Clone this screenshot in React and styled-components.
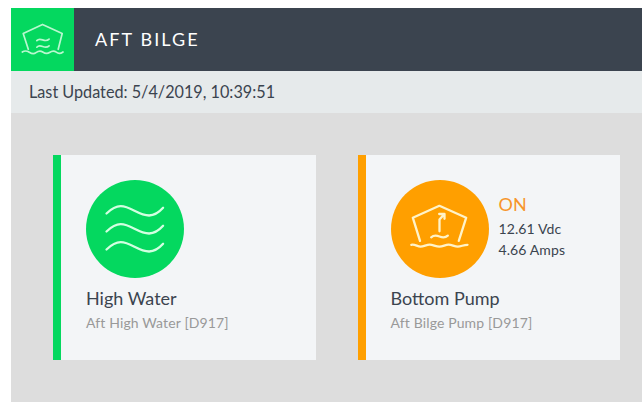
import { styled, createGlobalStyle } from 'styled-components'

const GlobalStyle = createGlobalStyle`
  body {
    margin: 0;
    background: #ffffff;
    font-family: Lato, 'Liberation Sans', sans-serif;
    overflow: hidden;
  }
`

const Panel = styled.main`
  box-sizing: border-box;
  height: 394px;
  margin: 8px 0 0 11px;
  background: #dddddd;
`

const Header = styled.header`
  display: flex;
  align-items: center;
  height: 63px;
  background: #3b444f;
`

const HeaderIcon = styled.div`
  width: 63px;
  height: 63px;
  background: #04d85f;
`

const Title = styled.h1`
  margin: 0 0 2px 21px;
  font-size: 18px;
  font-weight: 400;
  line-height: 24px;
  letter-spacing: 2.1px;
  color: #ffffff;
`

const Updated = styled.div`
  height: 42px;
  padding-left: 18px;
  background: #e6eaeb;
  color: #3b444f;
  font-size: 18px;
  line-height: 41px;
`

/* the timestamp line is set slightly condensed */
const Condensed = styled.span`
  display: inline-block;
  transform: scaleX(0.9);
  transform-origin: left center;
`

const Cards = styled.div`
  display: flex;
  gap: 42px;
  padding: 42px 22px 0 42px;
`

const Card = styled.section`
  flex: 1;
  box-sizing: border-box;
  height: 205px;
  padding: 25px 0 0 25px;
  border-left: 8px solid ${({ $color }) => $color};
  background: #f3f5f7;
`

const CardTop = styled.div`
  display: flex;
  gap: 10px;
`

const Circle = styled.div`
  width: 98px;
  height: 98px;
  border-radius: 50%;
  background: ${({ $color }) => $color};
`

const Icon = styled.svg`
  display: block;
  fill: none;
  stroke: ${({ $stroke }) => $stroke};
  stroke-width: ${({ $weight }) => $weight};
  stroke-linecap: round;
  stroke-linejoin: round;
`

const Readings = styled.div`
  padding-top: 14px;
  color: #3b444f;
  font-size: 14px;
  line-height: 21px;
  letter-spacing: 0.1px;
`

const Status = styled.div`
  margin-bottom: 3px;
  font-size: 18px;
  letter-spacing: 0;
  color: #f7952b;
`

const Name = styled.h2`
  margin: 8px 0 0;
  font-size: 18px;
  font-weight: 400;
  line-height: 24px;
  color: #3b444f;
`

const Description = styled.p`
  margin: 3px 0 0;
  font-size: 14px;
  line-height: 20px;
  letter-spacing: 0.13px;
  color: #999999;
`

const GREEN = '#04d85f'
const ORANGE = '#ff9f00'

function BilgeIcon() {
  return (
    <Icon width="63" height="63" viewBox="0 0 63 63" $stroke="#b9f7cf" $weight={1.7}>
      <path d="M17.3 41.3L12.2 25.5L31.5 16.4L51.2 25.5L47.2 41.3" />
      <path d="M11.3 44C14 42.2 16 42.8 18.3 44.3S23 46.3 25 44.7S29.2 42.3 31.7 44S36 46.3 38.5 44.5S43 42.3 45.3 44.2S49.6 45.8 52 44" />
      <path d="M25.8 32.6C29.8 28.2 33.5 35.6 38.1 31.2M25.8 39.2C29.8 34.8 33.5 42.2 38.1 37.8" />
    </Icon>
  )
}

function WavesIcon() {
  return (
    <Icon width="98" height="98" viewBox="0 0 98 98" $stroke="#d3ffe1" $weight={2.3}>
      {[0, 18, 36].map((offset) => (
        <path
          key={offset}
          d={`M20.5 ${33.5 + offset}c4 -3.8 8.4 -7.3 14.2 -7.3c10 0 17.8 9.3 28.4 9.3c6 0 10.4 -3.7 14 -7.7`}
        />
      ))}
    </Icon>
  )
}

function PumpIcon() {
  return (
    <Icon width="98" height="98" viewBox="0 0 98 98" $stroke="#fff3c9" $weight={2.3}>
      <path d="M29 60.8L21.8 37.7L48.4 25.8L75.2 37.7L67.8 60.8" />
      <path d="M20.3 64.8C24 64 26.3 66.6 29.5 66.6S35.5 64.6 38.7 64.6S44.8 66.6 48.4 66.6S54.3 64.6 57.6 64.6S63.4 66.6 66.8 66.6S72.5 64.8 76.5 64.8" />
      <path d="M40.2 57.3C46.5 51.6 50.5 61.4 56.8 55.6" />
      <path d="M48.5 51.3V39.5L53.4 34M48.2 34H53.5V38.8" />
    </Icon>
  )
}

export default function App() {
  return (
    <>
      <GlobalStyle />
      <Panel>
        <Header>
          <HeaderIcon>
            <BilgeIcon />
          </HeaderIcon>
          <Title>AFT BILGE</Title>
        </Header>
        <Updated>
          <Condensed>Last Updated: 5/4/2019, 10:39:51</Condensed>
        </Updated>
        <Cards>
          <Card $color={GREEN}>
            <CardTop>
              <Circle $color={GREEN}>
                <WavesIcon />
              </Circle>
            </CardTop>
            <Name>High Water</Name>
            <Description>Aft High Water [D917]</Description>
          </Card>
          <Card $color={ORANGE}>
            <CardTop>
              <Circle $color={ORANGE}>
                <PumpIcon />
              </Circle>
              <Readings>
                <Status>ON</Status>
                <div>12.61 Vdc</div>
                <div>4.66 Amps</div>
              </Readings>
            </CardTop>
            <Name>Bottom Pump</Name>
            <Description>Aft Bilge Pump [D917]</Description>
          </Card>
        </Cards>
      </Panel>
    </>
  )
}
